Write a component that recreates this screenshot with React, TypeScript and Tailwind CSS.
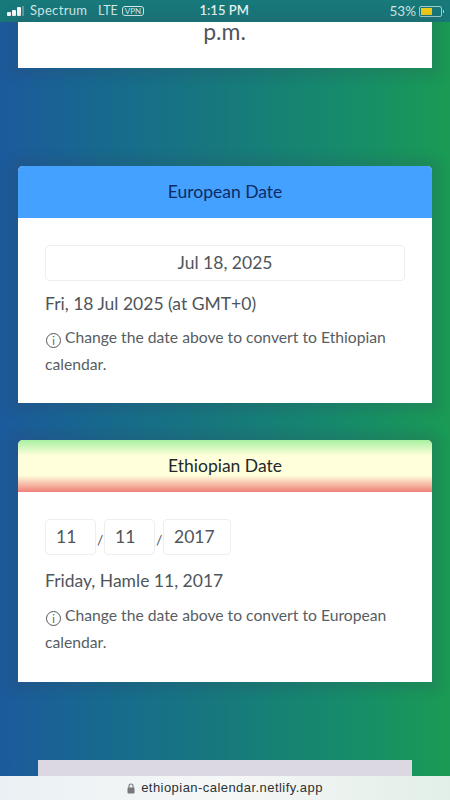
const font = { fontFamily: "Lato, 'Open Sans', sans-serif" };

function Note({ target }: { target: string }) {
  return (
    <p className="text-[15.7px] leading-[27px] text-[#575d62]">
      <span className="mr-[4px] ml-[1px] inline-grid h-[15px] w-[15px] translate-y-[2px] place-items-center rounded-full border border-[#50565c] text-[11px] leading-none">
        i
      </span>
      Change the date above to convert to {target} calendar.
    </p>
  );
}

function DatePart({ value, width }: { value: string; width: string }) {
  return (
    <div className={`flex h-[36px] items-center rounded border border-[#eeeeee] pl-[10px] text-[17.5px] text-[#4f555a] ${width}`}>
      {value}
    </div>
  );
}

export default function App() {
  return (
    <div
      className="flex h-[800px] w-[450px] flex-col overflow-hidden bg-gradient-to-r from-[#1c5a9c] via-[#17797c] to-[#1a9b54]"
      style={font}
    >
      {/* iOS status bar */}
      <div className="flex h-[22px] shrink-0 items-center bg-[#17797a] pl-[7px] pr-[6px] text-[13px] text-[#d5ecea]">
        <div className="flex w-[18px] items-end gap-[1px]">
          <span className="h-[4px] w-[4px] rounded-[1px] bg-white" />
          <span className="h-[6px] w-[4px] rounded-[1px] bg-white" />
          <span className="h-[9px] w-[4px] rounded-[1px] bg-white" />
          <span className="h-[10px] w-[2px] bg-white/30" />
        </div>
        <span className="ml-[5px] w-[69px] tracking-[0.35px]">Spectrum</span>
        <span className="-ml-[1px] text-[12.5px]">LTE</span>
        <span className="ml-[4px] rounded-[3px] border border-[#d5ecea] px-[2px] text-[8px] leading-[8px]">VPN</span>
        <span className="ml-[50px] w-[60px] text-center font-semibold text-[#e8f6f4]">1:15 PM</span>
        <span className="ml-auto text-[13.5px]">53%</span>
        <div className="ml-[3px] flex h-[11px] w-[23px] rounded-[2px] border border-[#a5cfcb] p-[1px]">
          <span className="h-full w-[11px] bg-[#f6cf16]" />
        </div>
        <span className="ml-[1px] h-[3px] w-[1px] bg-[#a5cfcb]" />
      </div>

      <main className="flex flex-1 flex-col px-[18px]">
        {/* end of the previous card, scrolled off */}
        <section className="h-[46px] shrink-0 bg-white pr-[1px] text-center text-[23px] leading-[18px] text-[#50565c] shadow-[0_0_10px_9px_rgba(60,60,90,0.15)]">
          p.m.
        </section>

        <section className="mt-[98px] h-[237px] shrink-0 overflow-hidden rounded-t-[5px] bg-white shadow-[0_0_10px_9px_rgba(60,60,90,0.15)]">
          <header className="flex h-[52px] items-center justify-center bg-[#45a1ff] text-[17.5px] text-[#0d2b66]">
            European Date
          </header>
          <div className="px-[27px] pt-[27px]">
            <div className="flex h-[36px] items-center justify-center rounded border border-[#eeeeee] text-[17.5px] text-[#4f555a]">
              Jul 18, 2025
            </div>
            <p className="mt-[10px] text-[17.5px] leading-[26px] text-[#4f555a]">Fri, 18 Jul 2025 (at GMT+0)</p>
            <div className="mt-[7px]">
              <Note target="Ethiopian" />
            </div>
          </div>
        </section>

        <section className="mt-[37px] h-[242px] shrink-0 overflow-hidden rounded-t-[5px] bg-white shadow-[0_0_10px_9px_rgba(60,60,90,0.15)]">
          <header className="flex h-[52px] items-center justify-center bg-[linear-gradient(to_bottom,#a8f0a0_0%,#ffffdc_30%,#ffffdc_68%,#ee8078_100%)] text-[17.5px] text-[#23282c]">
            Ethiopian Date
          </header>
          <div className="px-[27px] pt-[27px]">
            <div className="flex items-center">
              <DatePart value="11" width="w-[51px]" />
              <span className="w-[8px] translate-y-[2px] pl-[1px] text-[14px] text-[#494f55]">/</span>
              <DatePart value="11" width="w-[51px]" />
              <span className="w-[8px] translate-y-[2px] pl-[1px] text-[14px] text-[#494f55]">/</span>
              <DatePart value="2017" width="w-[68px]" />
            </div>
            <p className="mt-[13px] text-[17.5px] leading-[26px] text-[#4f555a]">Friday, Hamle 11, 2017</p>
            <div className="mt-[8px]">
              <Note target="European" />
            </div>
          </div>
        </section>

        {/* next card peeking out above the address bar */}
        <section className="mx-[20px] mt-[78px] h-[16px] shrink-0 bg-[#dcd8e2]" />
      </main>

      {/* Safari address bar */}
      <footer className="flex h-[24px] shrink-0 items-center justify-center gap-[6px] bg-gradient-to-r from-[#eaf1f4] via-[#f6f7f7] to-[#e2efe8] text-[13px] tracking-[0.45px] text-[#2d3236]">
        <svg width="8" height="11" viewBox="0 0 8 11">
          <path d="M2 5V3a2 2 0 0 1 4 0v2" fill="none" stroke="#77777c" strokeWidth="1.1" />
          <rect x="0.5" y="4.5" width="7" height="6" rx="1" fill="#77777c" />
        </svg>
        <span style={{ fontFamily: "'Liberation Sans', sans-serif" }}>ethiopian-calendar.netlify.app</span>
      </footer>
    </div>
  );
}
